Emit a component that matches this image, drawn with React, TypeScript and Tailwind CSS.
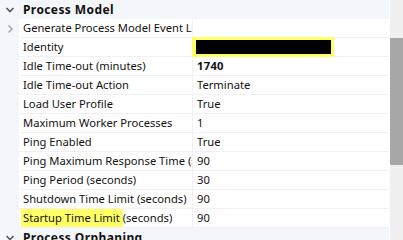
import { ReactNode } from "react";

const rows: Array<{ name: ReactNode; value: ReactNode }> = [
  { name: "Generate Process Model Event Log Entry", value: "" },
  {
    name: "Identity",
    value: (
      <span className="flex h-[20px] w-[142px] -ml-[5px] items-center bg-[#ffff66] pl-[4px] pr-[3px]">
        <span className="block h-[14px] w-full bg-black" />
      </span>
    ),
  },
  { name: "Idle Time-out (minutes)", value: <b className="font-bold tracking-[0.3px]">1740</b> },
  { name: "Idle Time-out Action", value: "Terminate" },
  { name: "Load User Profile", value: "True" },
  { name: "Maximum Worker Processes", value: "1" },
  { name: "Ping Enabled", value: "True" },
  { name: "Ping Maximum Response Time (seconds)", value: "90" },
  { name: "Ping Period (seconds)", value: "30" },
  { name: "Shutdown Time Limit (seconds)", value: "90" },
  {
    name: (
      <>
        <span className="-ml-[2px] inline-flex h-[19px] items-center bg-[#ffff66] pl-[2px]">Startup Time Limit&nbsp;</span>
        (seconds)
      </>
    ),
    value: "90",
  },
];

function Chevron({ open, light }: { open: boolean; light?: boolean }) {
  return (
    <svg width="10" height="10" viewBox="0 0 10 10" className="shrink-0">
      {open ? (
        <path d="M1.5 3 L5 6.5 L8.5 3" fill="none" stroke="#555" strokeWidth="1.6" />
      ) : (
        <path d="M3.5 1.5 L7 5 L3.5 8.5" fill="none" stroke={light ? "#a5a5a5" : "#555"} strokeWidth="1.6" />
      )}
    </svg>
  );
}

function Category({ label }: { label: string }) {
  return (
    <div className="flex h-[19px] items-center bg-[#f3f6fb]">
      <div className="flex w-[19px] justify-center">
        <Chevron open />
      </div>
      <span className="pl-[4px] text-[12px] font-bold tracking-[0.4px]">{label}</span>
    </div>
  );
}

export default function App() {
  return (
    <div
      className="flex h-[240px] w-[403px] overflow-hidden bg-white text-[11.2px] leading-none text-[#111]"
      style={{ fontFamily: '"Segoe UI", "Noto Sans", sans-serif' }}
    >
      <div className="w-[389px]">
        <Category label="Process Model" />
        {rows.map((r, i) => (
          <div key={i} className="flex h-[19px] bg-[#f3f6fb]">
            <div className="flex w-[19px] items-center justify-center">
              {i === 0 && <Chevron open={false} light />}
            </div>
            <div className="flex flex-1 border-b border-[#f0f0f6] bg-white">
              <div className="flex w-[174px] items-center overflow-hidden whitespace-nowrap border-r border-[#f0f0f6] pl-[4px]">
                {r.name}
              </div>
              <div className="flex flex-1 items-center pl-[4px]">{r.value}</div>
            </div>
          </div>
        ))}
        <Category label="Process Orphaning" />
      </div>
      <div className="ml-[1px] flex w-[13px] flex-col bg-[#f0f0f0]">
        <div className="h-[38px]" />
        <div className="h-[127px] bg-[#a6a6a6]" />
      </div>
    </div>
  );
}
